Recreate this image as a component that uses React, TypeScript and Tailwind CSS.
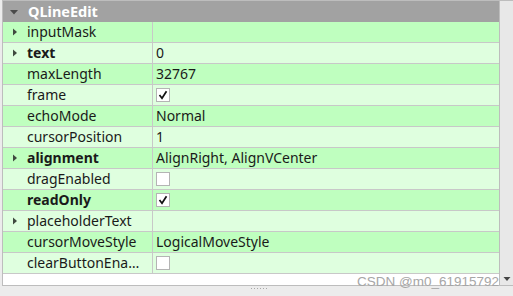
import React from 'react';

type Row = {
  name: string;
  value?: string;
  check?: boolean;
  bold?: boolean;
  expand?: boolean;
};

const rows: Row[] = [
  { name: 'inputMask', expand: true },
  { name: 'text', value: '0', bold: true, expand: true },
  { name: 'maxLength', value: '32767' },
  { name: 'frame', check: true },
  { name: 'echoMode', value: 'Normal' },
  { name: 'cursorPosition', value: '1' },
  { name: 'alignment', value: 'AlignRight, AlignVCenter', bold: true, expand: true },
  { name: 'dragEnabled', check: false },
  { name: 'readOnly', check: true, bold: true },
  { name: 'placeholderText', expand: true },
  { name: 'cursorMoveStyle', value: 'LogicalMoveStyle' },
  { name: 'clearButtonEna…', check: false },
];

function CheckBox({ on }: { on: boolean }) {
  return (
    <span className="flex h-[14px] w-[14px] items-center justify-center border border-[#b4b4b4] bg-white">
      {on && (
        <svg width="10" height="10" viewBox="0 0 10 10">
          <path d="M1.5 5 L4 8.2 L8.5 1.2" fill="none" stroke="#111" strokeWidth="1.7" />
        </svg>
      )}
    </span>
  );
}

export default function App() {
  return (
    <div
      className="relative h-[296px] w-[513px] overflow-hidden bg-[#ececec] text-[14px] text-[#1a1a1a]"
      style={{ fontFamily: '"Noto Sans", "Open Sans", sans-serif' }}
    >
      <div className="ml-[2px] flex h-[286px] border-y border-l border-[#bdbdbd] bg-white">
        <div className="flex w-[496px] flex-col">
          <div className="flex h-[21px] items-center bg-[#a2a2a2]">
            <svg className="ml-[6px]" width="10" height="10" viewBox="0 0 10 10">
              <path d="M1 3 L9 3 L5 7.5 Z" fill="#4a4a4a" />
            </svg>
            <span className="ml-[9px] text-[14.5px] font-bold leading-none text-white">QLineEdit</span>
          </div>
          {rows.map((r, i) => (
            <div
              key={r.name}
              className={`flex h-[21px] border-b border-[#c8c8c8] ${i % 2 === 0 ? 'bg-[#bfffbf]' : 'bg-[#dfffdf]'}`}
            >
              <div className="flex w-[150px] items-center border-r border-[#c8c8c8]">
                <span className="flex w-[24px] justify-center">
                  {r.expand && (
                    <svg width="6" height="8" viewBox="0 0 6 8">
                      <path d="M1 0.5 L5 4 L1 7.5 Z" fill="#3f4a3f" />
                    </svg>
                  )}
                </span>
                <span className={`leading-none ${r.bold ? 'font-bold' : ''}`}>{r.name}</span>
              </div>
              <div className="flex flex-1 items-center pl-[3px]">
                {r.check !== undefined ? <CheckBox on={r.check} /> : <span className="leading-none">{r.value}</span>}
              </div>
            </div>
          ))}
        </div>
        <div className="flex flex-1 flex-col justify-end border-l border-[#bdbdbd] bg-[#e8e8e8]">
          <svg className="mb-[3px] ml-[3px]" width="8" height="6" viewBox="0 0 8 6">
            <path d="M0.5 1 L7.5 1 L4 5 Z" fill="#444" />
          </svg>
        </div>
      </div>
      <div className="flex justify-center gap-[2px] pt-[2px] pl-[4px]">
        {[0, 1, 2, 3, 4, 5].map((d) => (
          <span key={d} className="h-[1px] w-[1px] bg-[#a8a8a8]" />
        ))}
      </div>
      <span
        className="absolute left-[357px] top-[275px] text-[13.5px] leading-none text-[#a6a6a6]"
        style={{ fontFamily: '"Liberation Sans", Arial, sans-serif' }}
      >
        CSDN @m0_61915792
      </span>
    </div>
  );
}
